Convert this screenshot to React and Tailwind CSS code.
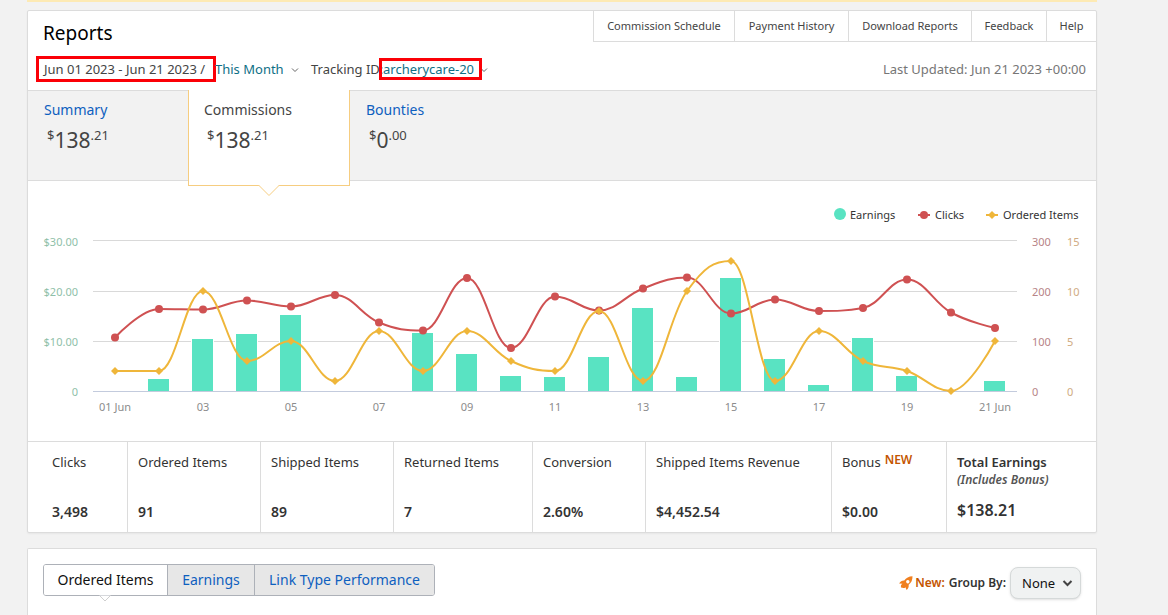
import { useState } from "react";
import clsx from "clsx";

const reportLinks = [
  { label: "Commission Schedule", width: "w-[141px]" },
  { label: "Payment History", width: "w-[114px]" },
  { label: "Download Reports", width: "w-[123px]" },
  { label: "Feedback", width: "w-[75px]" },
  { label: "Help", width: "w-[49px]" },
];

const summaryTabs = [
  { name: "Summary", whole: "138", cents: ".21" },
  { name: "Commissions", whole: "138", cents: ".21" },
  { name: "Bounties", whole: "0", cents: ".00" },
];

const stats = [
  { label: "Clicks", value: "3,498" },
  { label: "Ordered Items", value: "91" },
  { label: "Shipped Items", value: "89" },
  { label: "Returned Items", value: "7" },
  { label: "Conversion", value: "2.60%" },
  { label: "Shipped Items Revenue", value: "$4,452.54" },
  { label: "Bonus", value: "$0.00", isNew: true },
];

const detailTabs = [
  { name: "Ordered Items", width: "w-[124px]" },
  { name: "Earnings", width: "w-[87px]" },
  { name: "Link Type Performance", width: "w-[179px]" },
];

const clicks = [
  107, 164, 163, 181, 169, 192, 137, 121, 226, 86, 189, 161, 205, 227, 155, 183,
  160, 166, 223, 157, 126,
];
const orderedItems = [
  2, 2, 10, 3, 5, 1, 6, 2, 6, 3, 2, 8, 1, 10, 13, 1, 6, 3, 2, 0, 5,
];
const earnings = [
  0, 2.4, 10.4, 11.4, 15.2, 0, 0, 11.6, 7.4, 3, 2.8, 6.8, 16.6, 2.8, 22.6, 6.4,
  1.2, 10.6, 3, 0, 2,
];

// plot geometry, in viewBox units
const BASE = 191;
const FIRST = 87;
const STEP = 44;

const toPoints = (values, perUnit) =>
  values.map((v, i) => ({ x: FIRST + i * STEP, y: BASE - v * perUnit }));

// smooth line that never overshoots its own points
const splinePath = (points) => {
  let d = `M ${points[0].x} ${points[0].y}`;
  let out = points[0];

  for (let i = 1; i < points.length; i++) {
    const prev = points[i - 1];
    const p = points[i];
    const next = points[i + 1];
    let left = p;
    let right = p;

    if (next) {
      const lx = (1.5 * p.x + prev.x) / 2.5;
      let ly = (1.5 * p.y + prev.y) / 2.5;
      const rx = (1.5 * p.x + next.x) / 2.5;
      let ry = (1.5 * p.y + next.y) / 2.5;
      const shift = ((ry - ly) * (rx - p.x)) / (rx - lx) + p.y - ry;
      ly += shift;
      ry += shift;

      const topL = Math.max(prev.y, p.y);
      const lowL = Math.min(prev.y, p.y);
      if (ly > topL) {
        ly = topL;
        ry = 2 * p.y - ly;
      } else if (ly < lowL) {
        ly = lowL;
        ry = 2 * p.y - ly;
      }

      const topR = Math.max(next.y, p.y);
      const lowR = Math.min(next.y, p.y);
      if (ry > topR) {
        ry = topR;
        ly = 2 * p.y - ry;
      } else if (ry < lowR) {
        ry = lowR;
        ly = 2 * p.y - ry;
      }
      left = { x: lx, y: ly };
      right = { x: rx, y: ry };
    }

    d += ` C ${out.x} ${out.y} ${left.x} ${left.y} ${p.x} ${p.y}`;
    out = right;
  }
  return d;
};

const Diamond = ({ x, y }) => (
  <path
    d={`M ${x} ${y - 4} l 4 4 l -4 4 l -4 -4 z`}
    fill="#efb63a"
  />
);

const Chevron = ({ className }) => (
  <svg
    viewBox="0 0 8 6"
    className={clsx("pointer-events-none absolute", className)}
    fill="none"
    stroke="currentColor"
  >
    <path d="M1 1.5 L4 4.5 L7 1.5" />
  </svg>
);

const EarningsChart = () => {
  const clickPoints = toPoints(clicks, 0.5);
  const itemPoints = toPoints(orderedItems, 10);

  return (
    <svg
      viewBox="0 0 1068 230"
      className="block h-auto w-full text-[11px]"
      role="img"
      aria-label="Earnings, clicks and ordered items by day"
    >
      <g fill="#333">
        <circle cx="812" cy="14" r="6" fill="#59e3c2" />
        <text x="822" y="19">Earnings</text>
        <path d="M 890 15 h 12" stroke="#cf5152" strokeWidth="2" />
        <circle cx="896" cy="15" r="4" fill="#cf5152" />
        <text x="907" y="19">Clicks</text>
        <path d="M 958 15 h 12" stroke="#efb63a" strokeWidth="2" />
        <Diamond x={964} y={15} />
        <text x="975" y="19">Ordered Items</text>
      </g>

      <path
        d="M 65 40.5 H 989 M 65 91.5 H 989 M 65 141.5 H 989"
        stroke="#d9d9d9"
      />

      {earnings.map(
        (v, i) =>
          v > 0 && (
            <rect
              key={i}
              x={FIRST + i * STEP - 11.5}
              y={BASE - v * 5 - 0.5}
              width="22"
              height={v * 5 + 1}
              fill="#59e3c2"
              stroke="#fff"
            />
          )
      )}
      <path d="M 65 191.5 H 989" stroke="#c3cbdd" />

      <path
        d={splinePath(clickPoints)}
        fill="none"
        stroke="#cf5152"
        strokeWidth="2"
      />
      {clickPoints.map((p) => (
        <circle key={p.x} cx={p.x} cy={p.y} r="4" fill="#cf5152" />
      ))}

      <path
        d={splinePath(itemPoints)}
        fill="none"
        stroke="#efb63a"
        strokeWidth="2"
      />
      {itemPoints.map((p) => (
        <Diamond key={p.x} x={p.x} y={p.y} />
      ))}

      <g fill="#8fbfa9" textAnchor="end">
        {["$30.00", "$20.00", "$10.00", "0"].map((t, i) => (
          <text key={t} x="50" y={46 + i * 50}>{t}</text>
        ))}
      </g>
      <g fill="#b78487">
        {["300", "200", "100", "0"].map((t, i) => (
          <text key={t} x="1004" y={46 + i * 50}>{t}</text>
        ))}
      </g>
      <g fill="#d0ab82">
        {["15", "10", "5", "0"].map((t, i) => (
          <text key={t} x="1039" y={46 + i * 50}>{t}</text>
        ))}
      </g>
      <g fill="#8c8c8c" textAnchor="middle">
        {clicks.map((_, i) => {
          if (i % 2) return null;
          const day = String(i + 1).padStart(2, "0");
          const edge = i === 0 || i === clicks.length - 1;
          return (
            <text key={i} x={FIRST + i * STEP} y="211">
              {edge ? `${day} Jun` : day}
            </text>
          );
        })}
      </g>
    </svg>
  );
};

const Rocket = () => (
  <svg viewBox="0 0 14 14" className="h-3.5 w-3.5" fill="#f08020">
    <path
      fillRule="evenodd"
      d="M13.5 0.3 C9.8 0.5 7.2 1.8 5.2 4.5 C3 4.4 1.3 5.5 0.1 7.6 L3.4 7.8 C1.9 8.8 1.8 9.8 2 11.4 L3.4 11.8 C4.8 12.4 5.6 12 6.4 11.2 L7.6 13.9 C9.2 12.8 9.9 11.3 9.7 8.8 C12.3 6.8 13.6 4 13.5 0.3 Z M8.8 4 a1.7 1.7 0 1 0 0.02 0 Z"
    />
  </svg>
);

const App = () => {
  const [activeTab, setActiveTab] = useState("Commissions");
  const [activeDetail, setActiveDetail] = useState("Ordered Items");

  return (
    <div className="flex min-h-screen flex-col bg-[#f2f2f2] pr-[71px] pl-[27px] font-['Noto_Sans',sans-serif] text-[13px] leading-5 text-[#444]">
      <div className="h-0.5 bg-[#fdeab4]" />

      <main className="mt-2 rounded-xs border border-[#dcdcdc] bg-white shadow-xs">
        <header className="flex items-start justify-between">
          <h1 className="pt-2 pl-[15px] text-[19px] leading-7 text-black">
            Reports
          </h1>
          <nav className="flex border-b border-l border-[#dcdcdc] text-[11px]">
            {reportLinks.map(({ label, width }) => (
              <a
                key={label}
                href="#"
                className={clsx(
                  "border-r border-[#dcdcdc] py-[5px] text-center whitespace-nowrap last:border-r-0",
                  width
                )}
              >
                {label}
              </a>
            ))}
          </nav>
        </header>

        <div className="flex items-center pt-3 pr-2.5 pb-[11px] pl-4 whitespace-nowrap">
          <span className="relative w-[171px]">
            Jun 01 2023 - Jun 21 2023 /
            <span className="absolute -inset-y-[3px] -right-px -left-2 border-3 border-[#fb0007]" />
          </span>
          <span className="relative text-[#0f7086]">
            <select
              aria-label="Date range"
              className="w-[84px] appearance-none bg-transparent"
            >
              <option>This Month</option>
            </select>
            <Chevron className="top-2 right-0 h-1.5 w-2 text-[#666]" />
          </span>
          <label htmlFor="tracking" className="ml-3 w-[72px]">
            Tracking ID:
          </label>
          <span className="relative text-[#0f7086]">
            <select
              id="tracking"
              className="w-[105px] appearance-none bg-transparent"
            >
              <option>archerycare-20</option>
            </select>
            <Chevron className="top-2 right-0 h-1.5 w-2 text-[#666]" />
            <span className="pointer-events-none absolute -inset-y-px right-1.5 -left-1 border-3 border-[#fb0007]" />
          </span>
          <span className="ml-auto text-[#767676]">
            Last Updated: Jun 21 2023 +00:00
          </span>
        </div>

        <div className="flex h-[91px] items-start border-y border-[#dcdcdc] bg-[#f2f2f2]">
          {summaryTabs.map(({ name, whole, cents }) => {
            const active = activeTab === name;
            return (
              <button
                key={name}
                onClick={() => setActiveTab(name)}
                className={clsx(
                  "relative -mt-px flex flex-col items-start border border-t-0 pt-2.5 pl-[15px] text-left",
                  active
                    ? "h-24 w-[162px] border-[#f6cd80] bg-white"
                    : "h-[90px] w-[160px] border-transparent"
                )}
              >
                <span
                  className={clsx(
                    "text-[14px]",
                    active ? "text-[#444]" : "text-[#0e60bf]"
                  )}
                >
                  {name}
                </span>
                <span className="mt-[5px] flex items-start pl-[3px]">
                  <span>$</span>
                  <span className="pt-[5px] text-[21px]">{whole}</span>
                  <span>{cents}</span>
                </span>
                {active && (
                  <svg
                    viewBox="0 0 22 12"
                    className="absolute top-full left-[69px] h-3 w-[22px]"
                    fill="#fff"
                    stroke="#f6cd80"
                  >
                    <path d="M0.5 0 L11 10.5 L21.5 0" />
                  </svg>
                )}
              </button>
            );
          })}
        </div>

        <div className="pt-[19px] pb-[11px]">
          <EarningsChart />
        </div>

        <dl className="grid grid-cols-[100fr_133fr_133fr_139fr_113fr_186fr_115fr_149fr] border-t border-[#dcdcdc] text-[#333]">
          {stats.map(({ label, value, isNew }) => (
            <div
              key={label}
              className="border-r border-[#dcdcdc] pt-2.5 pb-2.5 pl-2.5 whitespace-nowrap first:pl-6"
            >
              <dt className="flex items-start">
                {label}
                {isNew && (
                  <span className="ml-1 text-[12px] leading-4 font-semibold text-[#c45500]">
                    NEW
                  </span>
                )}
              </dt>
              <dd className="pt-[30px] text-[14px] font-semibold">{value}</dd>
            </div>
          ))}
          <div className="pt-2.5 pl-2.5 font-semibold whitespace-nowrap">
            <dt>
              Total Earnings
              <em className="block text-[12px] leading-4 text-[#555]">
                (Includes Bonus)
              </em>
            </dt>
            <dd className="pt-3 text-[16px]">$138.21</dd>
          </div>
        </dl>
      </main>

      <section className="mt-[15px] flex flex-1 items-start justify-between rounded-t-xs border border-b-0 border-[#dcdcdc] bg-white px-[15px] pt-[15px]">
        <div className="flex rounded-[3px] border border-[#adb1b8] text-[14px]">
          {detailTabs.map(({ name, width }) => {
            const active = activeDetail === name;
            return (
              <button
                key={name}
                onClick={() => setActiveDetail(name)}
                className={clsx(
                  "relative h-[30px] border-r border-[#adb1b8] whitespace-nowrap first:rounded-l-[2px] last:rounded-r-[2px] last:border-r-0",
                  width,
                  active
                    ? "bg-white text-[#111]"
                    : "bg-[#e7e7e7] text-[#0e60bf]"
                )}
              >
                {name}
                {active && (
                  <svg
                    viewBox="0 0 12 7"
                    className="absolute top-full left-[55px] h-[7px] w-3"
                    fill="#fff"
                    stroke="#cfcfcf"
                  >
                    <path d="M0.5 0.5 L6 6 L11.5 0.5" />
                  </svg>
                )}
              </button>
            );
          })}
        </div>

        <div className="flex items-center pt-[3px] text-[12px] font-semibold">
          <Rocket />
          <span className="ml-0.5 text-[#c45500]">New:</span>
          <label htmlFor="group-by" className="mx-1 text-[#333]">
            Group By:
          </label>
          <span className="relative">
            <select
              id="group-by"
              className="block h-8 w-[71px] appearance-none rounded-lg border border-[#d5d9d9] bg-[#f0f2f2] pl-[11px] text-[13px] font-normal text-[#111] shadow-sm"
            >
              <option>None</option>
            </select>
            <Chevron className="top-3 right-2 h-2 w-[11px] stroke-[1.5] text-[#444]" />
          </span>
        </div>
      </section>
    </div>
  );
};

export default App;
